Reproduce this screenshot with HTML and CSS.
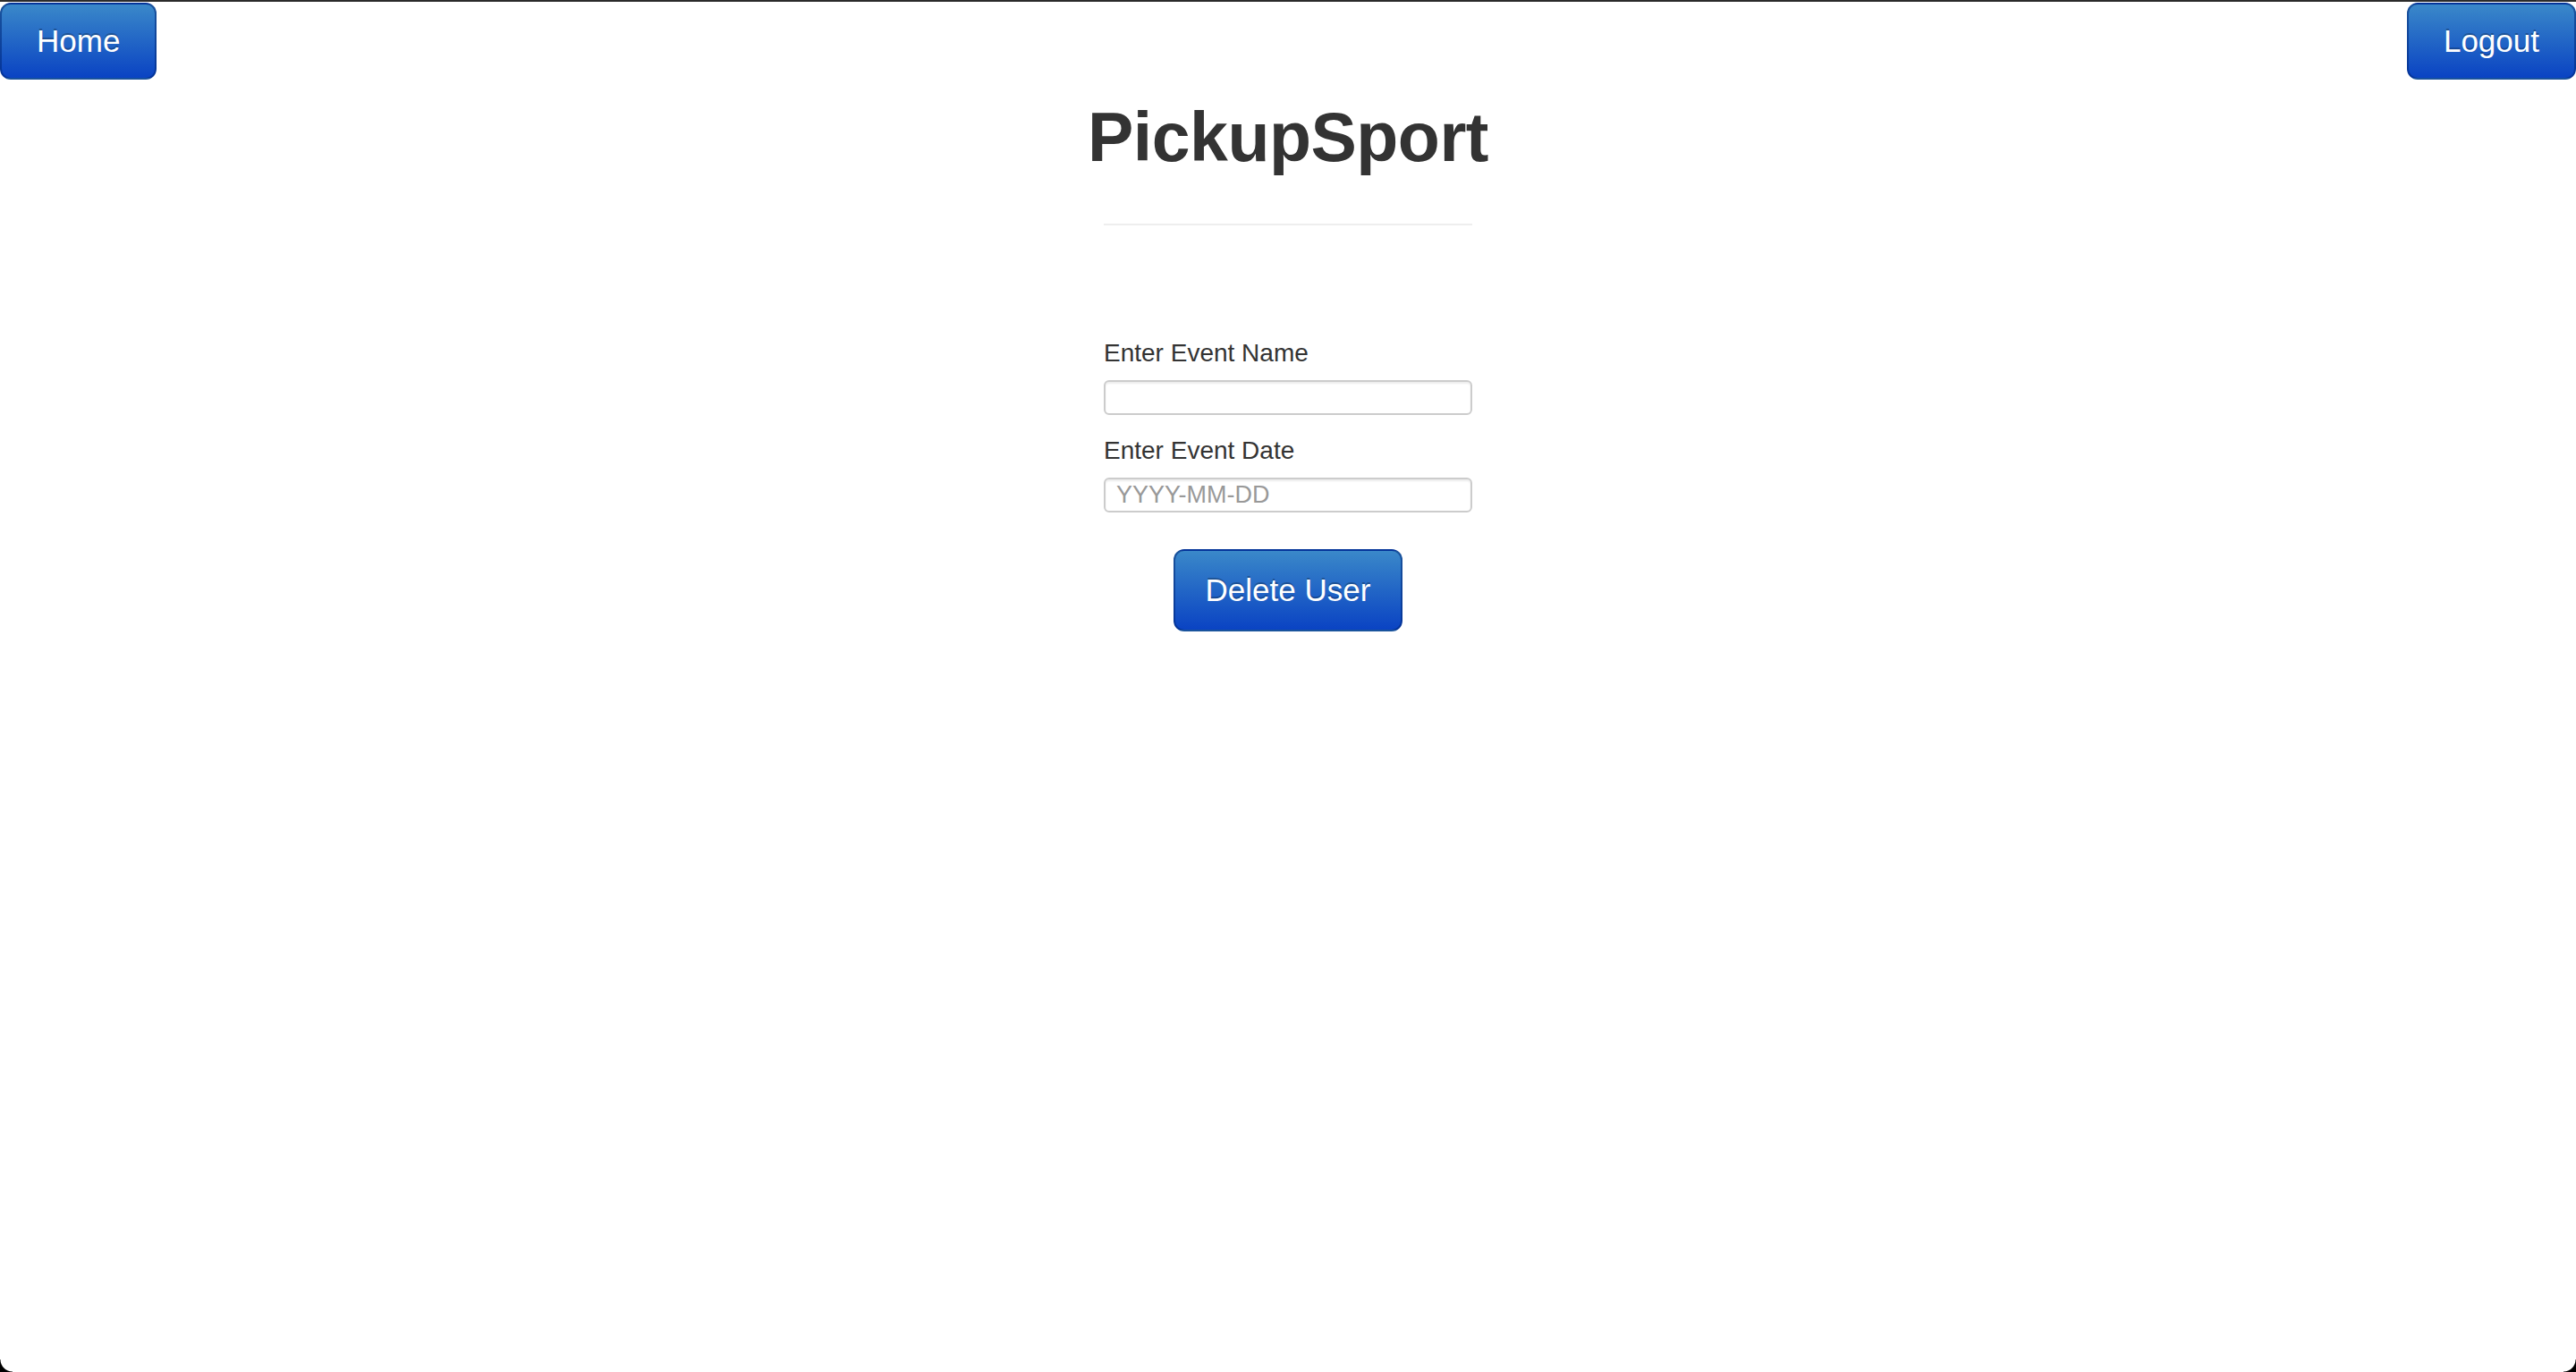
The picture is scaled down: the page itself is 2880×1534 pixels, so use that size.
FILE: index.html
```html
<!DOCTYPE html>
<html lang="en">
<head>
<meta charset="utf-8">
<title>PickupSport</title>
<link rel="stylesheet" href="styles.css">
</head>
<body>
<div class="window">
  <header class="topbar">
    <a class="btn btn-nav" href="#">Home</a>
    <a class="btn btn-nav" href="#">Logout</a>
  </header>
  <main class="container">
    <h1 class="title">PickupSport</h1>
    <hr class="rule">
    <form class="form">
      <label class="label" for="name">Enter Event Name</label>
      <input class="field field-first" id="name" type="text">
      <label class="label" for="date">Enter Event Date</label>
      <input class="field" id="date" type="text" placeholder="YYYY-MM-DD">
      <button class="btn btn-delete" type="button">Delete User</button>
    </form>
  </main>
  <div class="corner corner-left"></div>
  <div class="corner corner-right"></div>
</div>
</body>
</html>
```

FILE: styles.css
```css
html, body {
  margin: 0;
  padding: 0;
  background: #ffffff;
}

body {
  font-family: "Liberation Sans", Arial, sans-serif;
  color: #333333;
}

.window {
  position: relative;
  min-height: 1532px;
  border-top: 2px solid #2b2b2b;
  overflow: hidden;
}

.topbar {
  display: flex;
  justify-content: space-between;
  align-items: flex-start;
  padding-top: 1px;
}

.btn {
  display: inline-block;
  box-sizing: border-box;
  font-family: "Liberation Sans", Arial, sans-serif;
  font-size: 35px;
  line-height: 40px;
  color: #ffffff;
  text-decoration: none;
  text-shadow: 0 -2px 0 rgba(0, 0, 0, 0.25);
  background-color: #1a5fc6;
  background-image: linear-gradient(to bottom, #3a88c9, #0a43c3);
  border: 2px solid #1f4f94;
  border-color: rgba(0, 40, 120, 0.55);
  border-radius: 12px;
  cursor: pointer;
}

.btn-nav {
  padding: 21px 39px;
}

.container {
  width: 412px;
  margin: 0 auto;
}

.title {
  margin: 24px -100px 0;
  font-size: 77px;
  line-height: 80px;
  font-weight: bold;
  text-align: center;
  color: #333333;
  letter-spacing: -0.5px;
}

.rule {
  margin: 57px 0 0;
  height: 0;
  border: 0;
  border-top: 2px solid #eeeeee;
}

.form {
  display: flex;
  flex-direction: column;
  margin-top: 123px;
}

.label {
  display: block;
  font-size: 28px;
  line-height: 40px;
  color: #333333;
  margin-bottom: 10px;
}

.field {
  display: block;
  box-sizing: border-box;
  width: 100%;
  height: 39px;
  margin: 0;
  padding: 0 12px;
  font-family: "Liberation Sans", Arial, sans-serif;
  font-size: 27px;
  color: #555555;
  background: #ffffff;
  border: 2px solid #cccccc;
  border-radius: 6px;
  box-shadow: inset 0 2px 2px rgba(0, 0, 0, 0.075);
  outline: none;
}

.field::placeholder {
  color: #999999;
}

.field-first {
  margin-bottom: 20px;
}

.btn-delete {
  align-self: center;
  margin-top: 41px;
  padding: 24px 34px;
}

.corner {
  position: absolute;
  bottom: 0;
  width: 14px;
  height: 14px;
}

.corner-left {
  left: 0;
  background: radial-gradient(circle at 100% 0, transparent 13px, #000000 14px);
}

.corner-right {
  right: 0;
  background: radial-gradient(circle at 0 0, transparent 13px, #000000 14px);
}
```
